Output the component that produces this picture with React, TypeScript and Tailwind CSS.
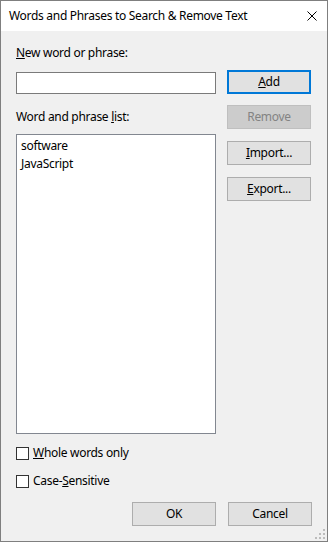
import React from "react";

function Btn({
  children,
  primary,
  disabled,
}: {
  children: React.ReactNode;
  primary?: boolean;
  disabled?: boolean;
}) {
  const base = "w-[84px] h-[24px] flex items-center justify-center text-[12px] leading-none";
  if (disabled)
    return <div className={`${base} bg-[#cccccc] border border-[#bfbfbf] text-[#838383]`}>{children}</div>;
  if (primary)
    return <div className={`${base} bg-[#e1e1e1] border-2 border-[#0078d7] text-black`}>{children}</div>;
  return <div className={`${base} bg-[#e1e1e1] border border-[#adadad] text-black`}>{children}</div>;
}

function Check({ children }: { children: React.ReactNode }) {
  return (
    <div className="flex items-center h-[16px]">
      <div className="w-[13px] h-[13px] border border-[#333333] bg-white" />
      <span className="ml-[4px] text-[12px] leading-[16px]">{children}</span>
    </div>
  );
}

export default function App() {
  return (
    <div
      className="w-[328px] h-[542px] flex flex-col border border-[#7f7f7f] bg-[#f0f0f0] text-black tracking-[-0.3px]"
      style={{ fontFamily: '"Noto Sans", "Segoe UI", sans-serif' }}
    >
      {/* Title bar */}
      <div className="h-[30px] bg-white flex items-center justify-between pl-[8px] pr-[10px] shrink-0">
        <span className="text-[12px]">Words and Phrases to Search &amp; Remove Text</span>
        <svg width="10" height="10" viewBox="0 0 10 10">
          <path d="M0.5 0.5 L9.5 9.5 M9.5 0.5 L0.5 9.5" stroke="#000" strokeWidth="1" />
        </svg>
      </div>

      {/* Body */}
      <div className="relative flex-1 flex flex-col px-[15px] pt-[14px]">
        <div className="flex gap-[11px]">
          <div className="w-[200px] flex flex-col">
            <div className="text-[12px] leading-[16px]">
              <span className="underline">N</span>ew word or phrase:
            </div>
            <div className="mt-[11px] h-[22px] bg-white border border-[#7a7a7a]" />
            <div className="mt-[15px] text-[12px] leading-[16px]">
              Word and phrase <span className="underline">l</span>ist:
            </div>
            <div className="mt-[9px] h-[300px] bg-white border border-[#828790] px-[4px] pt-[2px] text-[12px] leading-[18px]">
              <div>software</div>
              <div>JavaScript</div>
            </div>
            <div className="mt-[11px]">
              <Check>
                <span className="underline">W</span>hole words only
              </Check>
            </div>
            <div className="mt-[12px]">
              <Check>
                Case-<span className="underline">S</span>ensitive
              </Check>
            </div>
          </div>

          <div className="flex flex-col pt-[25px] gap-[11px]">
            <Btn primary>
              <span className="underline">A</span>dd
            </Btn>
            <Btn disabled>Remove</Btn>
            <div className="mt-[1px]">
              <Btn>
                <span className="underline">I</span>mport...
              </Btn>
            </div>
            <div className="mt-[1px]">
              <Btn>
                <span className="underline">E</span>xport...
              </Btn>
            </div>
          </div>
        </div>

        <div className="mt-[13px] flex justify-end gap-[12px]">
          <Btn>OK</Btn>
          <Btn>Cancel</Btn>
        </div>

        {/* Resize grip */}
        <svg className="absolute right-[1px] bottom-[1px]" width="11" height="11" viewBox="0 0 11 11">
          <rect x="8" y="0" width="2" height="2" fill="#bcbcbc" />
          <rect x="4" y="4" width="2" height="2" fill="#bcbcbc" />
          <rect x="8" y="4" width="2" height="2" fill="#bcbcbc" />
          <rect x="0" y="8" width="2" height="2" fill="#bcbcbc" />
          <rect x="4" y="8" width="2" height="2" fill="#bcbcbc" />
          <rect x="8" y="8" width="2" height="2" fill="#bcbcbc" />
        </svg>
      </div>
    </div>
  );
}
